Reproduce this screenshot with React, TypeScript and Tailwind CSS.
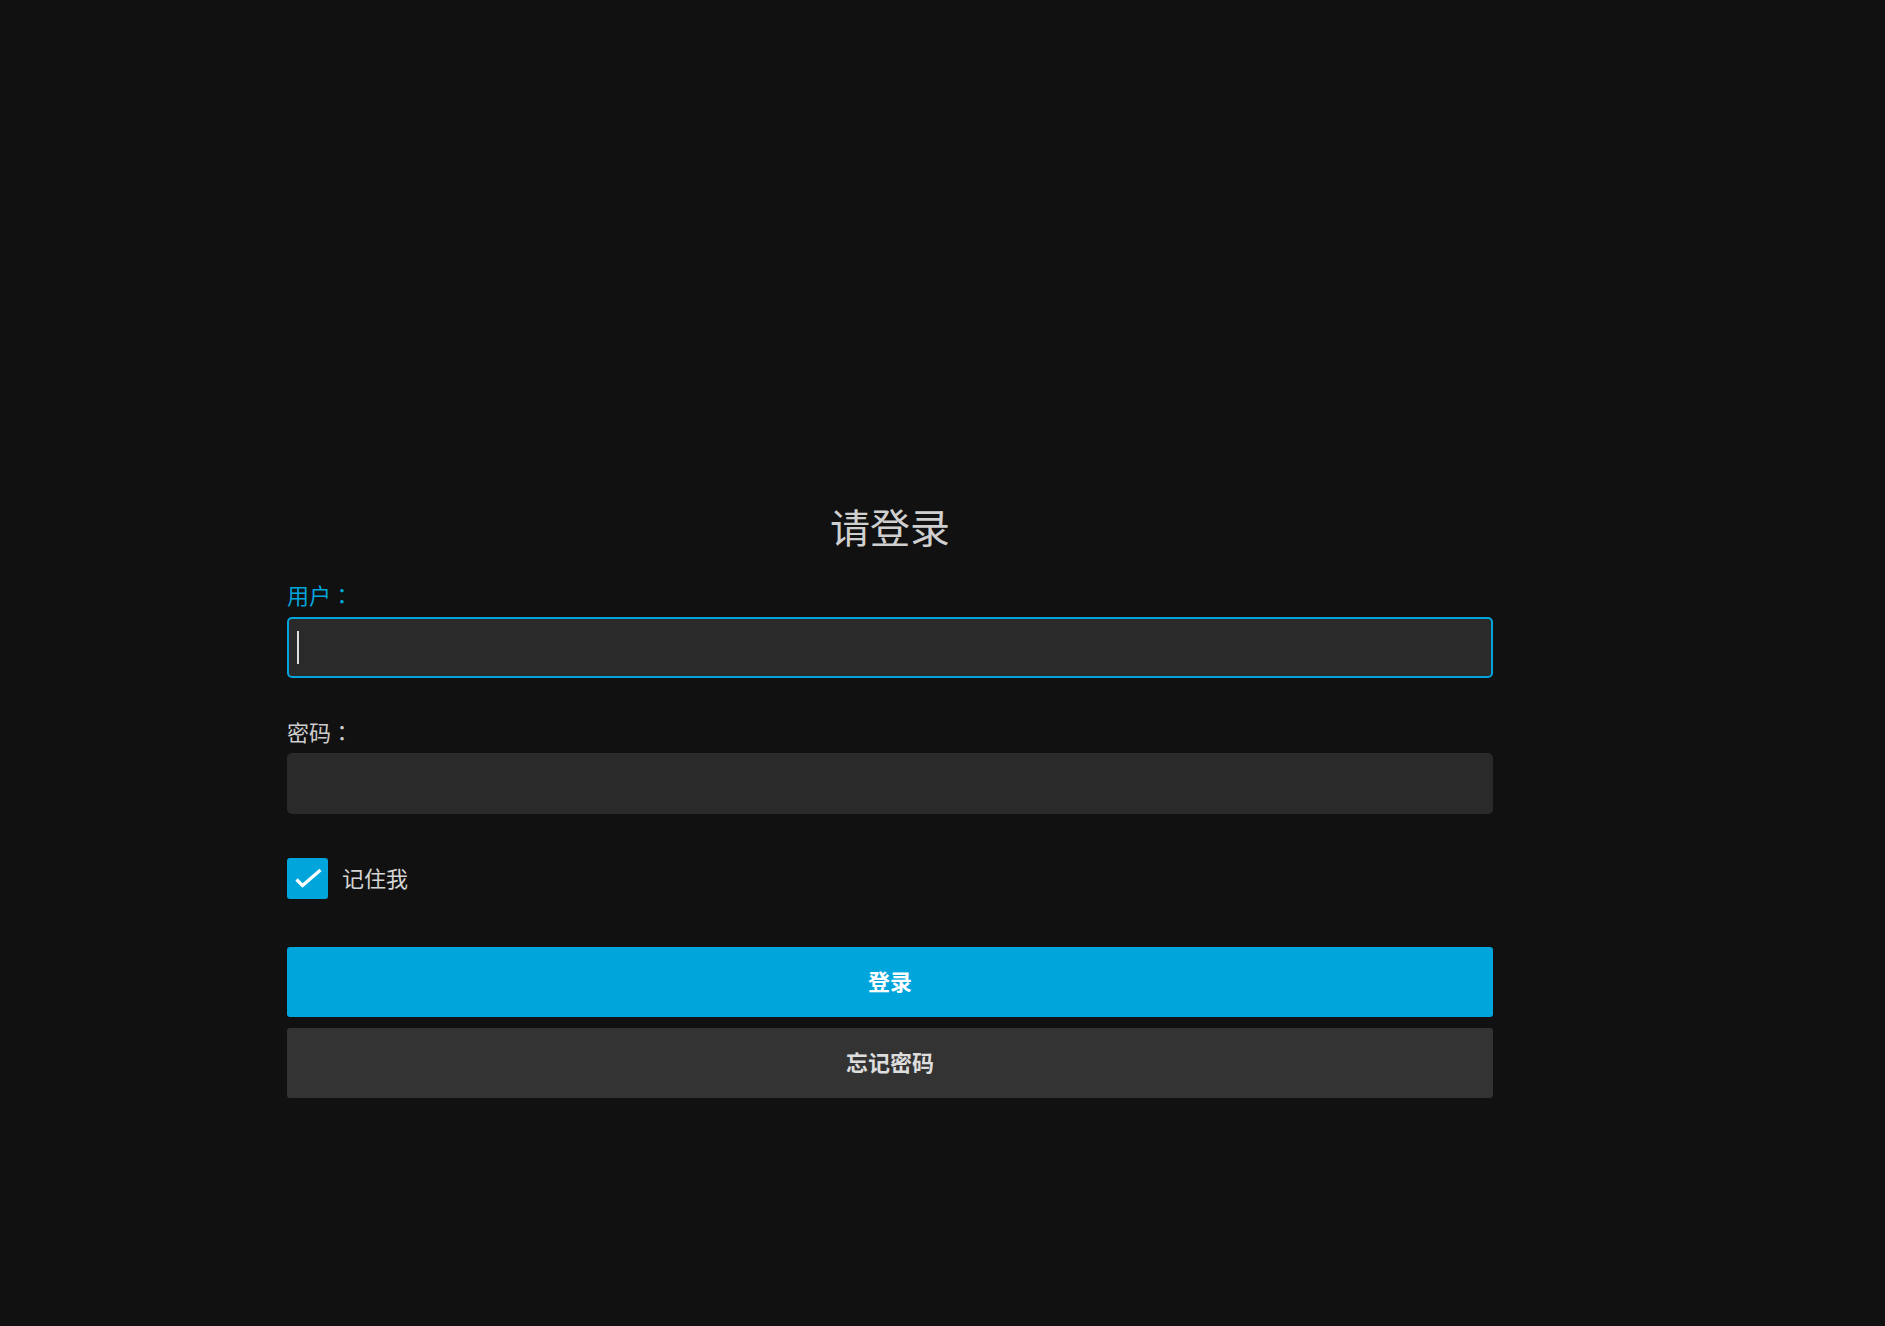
import React from 'react'

const font = {fontFamily: '"Noto Sans CJK SC", "Noto Sans", sans-serif'}

// full-width colon rendered centered, like the reference font does
function Colon(): React.ReactElement {
    return <span style={{fontFamily: '"Noto Sans CJK TC", sans-serif'}}>：</span>
}

export default function App(): React.ReactElement {
    return (
        <div className="min-h-[1326px] w-full bg-[#111111] text-[#cccccc]" style={font}>
            <div className="ml-[287px] w-[1206px] pt-[503px] flex flex-col">
                <h1 className="text-[40px] leading-[46px] text-center text-[#cfcfcf]">请登录</h1>

                <label className="mt-[31px] text-[22px] leading-[28px] text-[#00a5dc]">用户<Colon/></label>
                <div className="mt-[9px] h-[61px] rounded-[5px] border-2 border-[#00a5dc] bg-[#2a2a2a] flex items-center px-2">
                    <span className="block w-[2px] h-[33px] bg-[#dddddd]"/>
                </div>

                <label className="mt-[39px] text-[22px] leading-[28px] text-[#cccccc]">密码<Colon/></label>
                <div className="mt-[8px] h-[61px] rounded-[5px] bg-[#2a2a2a]"/>

                <div className="mt-[44px] flex items-center gap-[14px]">
                    <span className="w-[41px] h-[41px] rounded-[3px] bg-[#00a5dc] block">
                        <svg width="41" height="41" viewBox="0 0 41 41" fill="none" stroke="white" strokeWidth="3.2" strokeLinejoin="miter">
                            <path d="M9.5 21.5L15.5 27.5L33.5 12"/>
                        </svg>
                    </span>
                    <span className="text-[22px] leading-[30px] pb-[3px] text-[#d4d4d4]">记住我</span>
                </div>

                <button className="mt-[48px] h-[70px] pb-[4px] rounded-[3px] bg-[#00a5dc] text-white font-bold text-[22px]">登录</button>
                <button className="mt-[11px] h-[70px] pb-[4px] rounded-[3px] bg-[#333333] text-[#dddddd] font-bold text-[22px]">忘记密码</button>
            </div>
        </div>
    )
}
